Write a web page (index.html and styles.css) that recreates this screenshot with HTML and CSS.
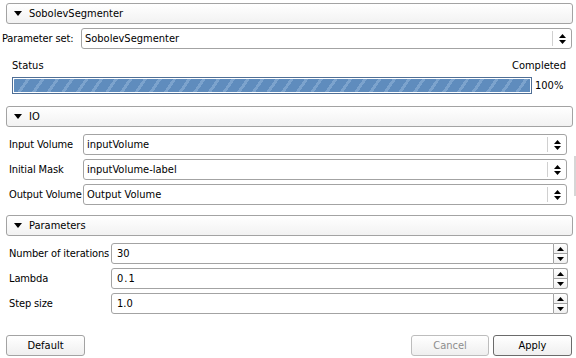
FILE: index.html
```html
<!DOCTYPE html>
<html lang="en">
<head>
    <meta charset="UTF-8">
    <title>SobolevSegmenter</title>
    <link rel="stylesheet" href="styles.css">
</head>
<body>
    <div class="modulo">
        <div class="cabecera cabecera-top">
            <span class="triangulo"></span>
            <span>SobolevSegmenter</span>
        </div>

        <div class="fila-parametros">
            <label>Parameter set:</label>
            <div class="combo">
                <span>SobolevSegmenter</span>
                <span class="combo-flecha">
                    <svg width="7" height="10" viewBox="0 0 7 10"><path d="M0 4 L3.5 0 L7 4 Z M0 6 L7 6 L3.5 10 Z" fill="#000"/></svg>
                </span>
            </div>
        </div>

        <div class="estado">
            <div class="estado-textos">
                <span>Status</span>
                <span>Completed</span>
            </div>
            <div class="estado-barra">
                <div class="barra"><div class="barra-relleno"></div></div>
                <span class="porcentaje">100%</span>
            </div>
        </div>

        <div class="cabecera cabecera-io">
            <span class="triangulo"></span>
            <span>IO</span>
        </div>

        <div class="bloque bloque-io">
            <div class="fila">
                <label>Input Volume</label>
                <div class="combo">
                    <span>inputVolume</span>
                    <span class="combo-flecha"><svg width="7" height="10" viewBox="0 0 7 10"><path d="M0 4 L3.5 0 L7 4 Z M0 6 L7 6 L3.5 10 Z" fill="#000"/></svg></span>
                </div>
            </div>
            <div class="fila">
                <label>Initial Mask</label>
                <div class="combo">
                    <span>inputVolume-label</span>
                    <span class="combo-flecha"><svg width="7" height="10" viewBox="0 0 7 10"><path d="M0 4 L3.5 0 L7 4 Z M0 6 L7 6 L3.5 10 Z" fill="#000"/></svg></span>
                </div>
            </div>
            <div class="fila">
                <label>Output Volume</label>
                <div class="combo">
                    <span>Output Volume</span>
                    <span class="combo-flecha"><svg width="7" height="10" viewBox="0 0 7 10"><path d="M0 4 L3.5 0 L7 4 Z M0 6 L7 6 L3.5 10 Z" fill="#000"/></svg></span>
                </div>
            </div>
            <div class="scroll"></div>
        </div>

        <div class="cabecera cabecera-param">
            <span class="triangulo"></span>
            <span>Parameters</span>
        </div>

        <div class="bloque bloque-param">
            <div class="fila">
                <label>Number of iterations</label>
                <div class="spin">
                    <span class="spin-valor">30</span>
                    <span class="spin-botones">
                        <span class="spin-boton"><svg width="7" height="4" viewBox="0 0 7 4"><path d="M0 4 L3.5 0 L7 4 Z" fill="#000"/></svg></span>
                        <span class="spin-boton"><svg width="7" height="4" viewBox="0 0 7 4"><path d="M0 0 L7 0 L3.5 4 Z" fill="#000"/></svg></span>
                    </span>
                </div>
            </div>
            <div class="fila">
                <label>Lambda</label>
                <div class="spin">
                    <span class="spin-valor espaciado">0.1</span>
                    <span class="spin-botones">
                        <span class="spin-boton"><svg width="7" height="4" viewBox="0 0 7 4"><path d="M0 4 L3.5 0 L7 4 Z" fill="#000"/></svg></span>
                        <span class="spin-boton"><svg width="7" height="4" viewBox="0 0 7 4"><path d="M0 0 L7 0 L3.5 4 Z" fill="#000"/></svg></span>
                    </span>
                </div>
            </div>
            <div class="fila">
                <label>Step size</label>
                <div class="spin">
                    <span class="spin-valor">1.0</span>
                    <span class="spin-botones">
                        <span class="spin-boton"><svg width="7" height="4" viewBox="0 0 7 4"><path d="M0 4 L3.5 0 L7 4 Z" fill="#000"/></svg></span>
                        <span class="spin-boton"><svg width="7" height="4" viewBox="0 0 7 4"><path d="M0 0 L7 0 L3.5 4 Z" fill="#000"/></svg></span>
                    </span>
                </div>
            </div>
        </div>

        <div class="botones">
            <button class="boton">Default</button>
            <span class="espacio"></span>
            <button class="boton desactivado">Cancel</button>
            <button class="boton principal">Apply</button>
        </div>
    </div>
</body>
</html>
```

FILE: styles.css
```css
* {
    box-sizing: border-box;
}
body {
    margin: 0;
    font-family: "DejaVu Sans Condensed", "DejaVu Sans", sans-serif;
    font-stretch: condensed;
    font-size: 11px;
    color: #000;
    background: #fff;
    width: 576px;
    height: 358px;
    overflow: hidden;
}
label {
    flex-shrink: 0;
    white-space: nowrap;
    letter-spacing: -0.12px;
}
.modulo {
    display: flex;
    flex-direction: column;
}
.cabecera {
    display: flex;
    align-items: center;
    height: 21px;
    margin: 0 3px 0 6px;
    padding-left: 7px;
    border: 1px solid #a3a3a3;
    border-radius: 3px;
    background: linear-gradient(#ffffff, #f2f2f2);
}
.cabecera-top {
    margin-top: 3px;
}
.cabecera-io {
    margin-top: 12px;
}
.cabecera-param {
    margin-top: 10px;
}
.triangulo {
    width: 0;
    height: 0;
    border-left: 4px solid transparent;
    border-right: 4px solid transparent;
    border-top: 5px solid #000;
    margin-right: 7px;
}
.fila-parametros {
    display: flex;
    align-items: center;
    margin: 4px 4px 0 2px;
}
.fila-parametros label {
    width: 79px;
}
.combo {
    flex: 1;
    display: flex;
    align-items: center;
    height: 21px;
    border: 1px solid #a3a3a3;
    border-radius: 3px;
    background: #fff;
    padding-left: 3px;
}
.combo span:first-child {
    flex: 1;
    white-space: nowrap;
}
.combo-flecha {
    display: flex;
    align-items: center;
    justify-content: center;
    width: 19px;
    height: 15px;
    border-left: 1px solid #d0d0d0;
}
.estado {
    margin: 10px 10px 0 12px;
}
.estado-textos {
    display: flex;
    justify-content: space-between;
    line-height: 13px;
}
.estado-barra {
    display: flex;
    align-items: center;
    margin-top: 5px;
}
.barra {
    width: 520px;
    height: 17px;
    border: 1px solid #4f6f96;
    background: #fff;
    padding: 1px;
}
.barra-relleno {
    height: 100%;
    background: repeating-linear-gradient(-55deg, #5f8cbd 0, #5f8cbd 9px, #7ca3cd 9px, #7ca3cd 12px);
}
.porcentaje {
    margin-left: 3px;
}
.bloque {
    position: relative;
    display: flex;
    flex-direction: column;
    gap: 4px;
    padding-top: 7px;
}
.fila {
    display: flex;
    align-items: center;
    padding-left: 9px;
}
.bloque-io .fila {
    padding-right: 9px;
}
.bloque-io label {
    width: 74px;
}
.bloque-param .fila {
    padding-right: 8px;
}
.bloque-param label {
    width: 102px;
}
.scroll {
    position: absolute;
    right: 0;
    top: 29px;
    width: 2px;
    height: 40px;
    background: #d6d6d6;
}
.spin {
    flex: 1;
    display: flex;
    align-items: stretch;
    height: 21px;
}
.spin-valor {
    flex: 1;
    display: flex;
    align-items: center;
    padding-left: 5px;
    border: 1px solid #a3a3a3;
    border-radius: 3px 0 0 3px;
}
.espaciado {
    letter-spacing: 1px;
}
.spin-botones {
    display: flex;
    flex-direction: column;
    width: 14px;
}
.spin-boton {
    flex: 1;
    display: flex;
    align-items: center;
    justify-content: center;
    border: 1px solid #a3a3a3;
    border-left: none;
    background: linear-gradient(#ffffff, #f0f0f0);
}
.spin-boton:first-child {
    border-bottom: none;
    border-radius: 0 3px 0 0;
}
.spin-boton:last-child {
    border-radius: 0 0 3px 0;
}
.botones {
    display: flex;
    margin: 21px 4px 0 6px;
    gap: 4px;
}
.espacio {
    flex: 1;
}
.boton {
    width: 79px;
    height: 21px;
    font-family: inherit;
    font-stretch: condensed;
    font-size: 11px;
    color: #000;
    border: 1px solid #a3a3a3;
    border-radius: 3px;
    background: linear-gradient(#ffffff, #efefef);
    padding: 0;
}
.desactivado {
    width: 78px;
    color: #8d8d8d;
    border-color: #bdbdbd;
}
.principal {
    border-color: #6b6b6b;
}
```
